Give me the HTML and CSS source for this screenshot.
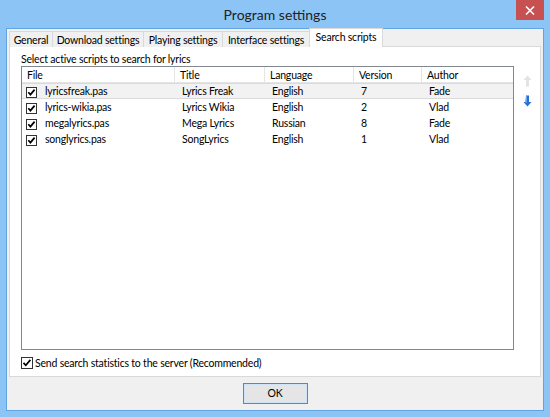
FILE: index.html
```html
<!DOCTYPE html>
<html>
<head>
<meta charset="utf-8">
<link rel="stylesheet" href="styles.css">
</head>
<body>
<div class="window">
  <div class="titlebar">
    <div></div>
    <div class="title">Program settings</div>
    <div class="close"><svg width="10" height="9" viewBox="0 0 10 9"><path d="M1 0.5 L9 8.5 M9 0.5 L1 8.5" stroke="#fff" stroke-width="1.6"/></svg></div>
  </div>
  <div class="client">
    <div class="tabs">
      <div class="tab t1">General</div>
      <div class="tab t2">Download settings</div>
      <div class="tab t3">Playing settings</div>
      <div class="tab t4">Interface settings</div>
      <div class="tab t5 active">Search scripts</div>
    </div>
    <div class="panel">
      <div class="label">Select active scripts to search for lyrics</div>
      <div class="listarea">
        <div class="list">
          <div class="row head">
            <div class="cell">File</div>
            <div class="cell">Title</div>
            <div class="cell">Language</div>
            <div class="cell">Version</div>
            <div class="cell">Author</div>
          </div>
          <div class="row item sel">
            <div class="cell first"><span class="cb"><svg width="11" height="11" viewBox="0 0 11 11"><rect x="0.5" y="0.5" width="10" height="10" fill="#fff" stroke="#333"/><path d="M2.3 5.3 L4.4 7.6 L8.6 2.6" fill="none" stroke="#000" stroke-width="1.7"/></svg></span>lyricsfreak.pas</div>
            <div class="cell">Lyrics Freak</div>
            <div class="cell">English</div>
            <div class="cell">7</div>
            <div class="cell">Fade</div>
          </div>
          <div class="row item">
            <div class="cell first"><span class="cb"><svg width="11" height="11" viewBox="0 0 11 11"><rect x="0.5" y="0.5" width="10" height="10" fill="#fff" stroke="#333"/><path d="M2.3 5.3 L4.4 7.6 L8.6 2.6" fill="none" stroke="#000" stroke-width="1.7"/></svg></span>lyrics-wikia.pas</div>
            <div class="cell">Lyrics Wikia</div>
            <div class="cell">English</div>
            <div class="cell">2</div>
            <div class="cell">Vlad</div>
          </div>
          <div class="row item">
            <div class="cell first"><span class="cb"><svg width="11" height="11" viewBox="0 0 11 11"><rect x="0.5" y="0.5" width="10" height="10" fill="#fff" stroke="#333"/><path d="M2.3 5.3 L4.4 7.6 L8.6 2.6" fill="none" stroke="#000" stroke-width="1.7"/></svg></span>megalyrics.pas</div>
            <div class="cell">Mega Lyrics</div>
            <div class="cell">Russian</div>
            <div class="cell">8</div>
            <div class="cell">Fade</div>
          </div>
          <div class="row item">
            <div class="cell first"><span class="cb"><svg width="11" height="11" viewBox="0 0 11 11"><rect x="0.5" y="0.5" width="10" height="10" fill="#fff" stroke="#333"/><path d="M2.3 5.3 L4.4 7.6 L8.6 2.6" fill="none" stroke="#000" stroke-width="1.7"/></svg></span>songlyrics.pas</div>
            <div class="cell">SongLyrics</div>
            <div class="cell">English</div>
            <div class="cell">1</div>
            <div class="cell">Vlad</div>
          </div>
        </div>
        <div class="arrows">
          <svg class="arrow" width="9" height="12" viewBox="0 0 9 12"><path d="M4.5 0.5 L8.5 5 L6 5 L6 11.5 L3 11.5 L3 5 L0.5 5 Z" fill="#e3e3e3"/></svg>
          <svg class="arrow" width="9" height="12" viewBox="0 0 9 12"><path d="M3 0.5 L6 0.5 L6 7 L8.5 7 L4.5 11.5 L0.5 7 L3 7 Z" fill="#2a6fd0"/><path d="M3 0.5 L4 0.5 L4 7.5 L2 7.5 Z" fill="#6aa6ef"/></svg>
        </div>
      </div>
      <div class="stat">
        <span class="cb"><svg width="12" height="12" viewBox="0 0 12 12"><rect x="0.5" y="0.5" width="11" height="11" fill="#fff" stroke="#333"/><path d="M2.5 5.8 L4.8 8.3 L9.4 2.9" fill="none" stroke="#000" stroke-width="1.7"/></svg></span>
        <span>Send search statistics to the server (Recommended)</span>
      </div>
    </div>
    <div class="footer">
      <div class="btn">OK</div>
    </div>
  </div>
</div>
</body>
</html>
```
FILE: styles.css
```css
html, body {
  margin: 0;
  padding: 0;
}
body {
  width: 550px;
  height: 417px;
  overflow: hidden;
  background: #8cc4f6;
  font-family: Lato, "Noto Sans", sans-serif;
  font-size: 10.5px;
  letter-spacing: -0.2px;
  color: #000;
}
.window {
  display: flex;
  flex-direction: column;
  height: 417px;
}
.titlebar {
  height: 28px;
  display: grid;
  grid-template-columns: 1fr auto 1fr;
}
.title {
  font-size: 14px;
  letter-spacing: 0;
  color: #222;
  line-height: 29px;
}
.close {
  justify-self: end;
  width: 28px;
  height: 20px;
  margin-right: 6px;
  background: #c75050;
  display: flex;
  align-items: center;
  justify-content: center;
}
.client {
  flex: 1;
  margin: 0 6px 6px 6px;
  border: 1px solid #62a3e2;
  background: #f0f0f0;
  display: flex;
  flex-direction: column;
  padding: 0 2px;
}
.tabs {
  display: flex;
  align-items: flex-end;
  height: 18px;
  position: relative;
  z-index: 1;
  margin-bottom: -1px;
}
.tab {
  box-sizing: border-box;
  height: 16px;
  line-height: 17px;
  text-align: center;
  border: 1px solid #d9d9d9;
  border-bottom: none;
  margin-right: -1px;
  background: #f0f0f0;
  color: #000;
  white-space: nowrap;
}
.t1 { width: 44px; }
.t2 { width: 92px; }
.t3 { width: 80px; }
.t4 { width: 88px; }
.t5 { width: 74px; }
.tab.active {
  height: 19px;
  line-height: 16px;
  background: #fff;
}
.panel {
  flex: 1;
  background: #fff;
  border: 1px solid #d9d9d9;
  display: flex;
  flex-direction: column;
  padding: 5px 0 6px 11px;
}
.label {
  height: 14px;
  line-height: 14px;
}
.listarea {
  display: flex;
  height: 284px;
}
.list {
  width: 492px;
  border: 1px solid #828790;
  background: #fff;
}
.row {
  display: grid;
  grid-template-columns: 153px 90px 89px 68px 1fr;
  height: 16px;
  line-height: 17px;
}
.head {
  height: 15px;
  line-height: 16px;
  border-bottom: 1px solid #e5e5e5;
}
.head .cell {
  padding-left: 5px;
  border-right: 1px solid #e5e5e5;
}
.head .cell:last-child {
  border-right: none;
}
.item .cell {
  padding-left: 7px;
  white-space: nowrap;
}
.item .cell.first {
  padding-left: 4px;
  display: flex;
  align-items: center;
}
.item.sel {
  background: #f2f2f2;
  box-shadow: inset 0 1px 0 #dadada, inset 0 -1px 0 #dadada;
}
.cb {
  display: inline-flex;
  width: 11px;
  height: 11px;
  margin-right: 8px;
  margin-top: 1px;
}
.arrows {
  display: flex;
  flex-direction: column;
  align-items: center;
  gap: 8px;
  width: 26px;
  padding-top: 9px;
}
.stat {
  display: flex;
  align-items: center;
  height: 13px;
  margin-top: 6px;
}
.stat .cb {
  width: 12px;
  height: 12px;
  margin-right: 2px;
  margin-top: 0;
}
.footer {
  height: 33px;
  display: flex;
  justify-content: center;
  align-items: center;
}
.btn {
  width: 63px;
  height: 19px;
  line-height: 19px;
  text-align: center;
  border: 1px solid #3c8fe1;
  background: #e5e5e5;
  box-shadow: inset 0 0 0 1px #cfe4f8;
}
```
